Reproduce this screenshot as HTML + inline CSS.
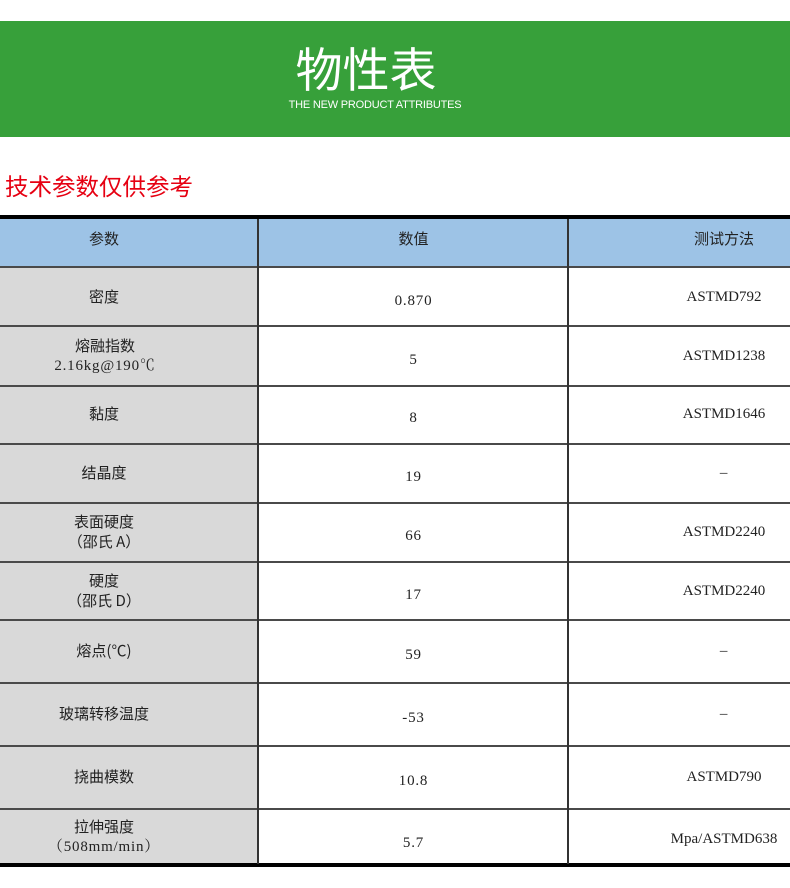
<!DOCTYPE html>
<html><head><meta charset="utf-8"><style>
*{margin:0;padding:0;box-sizing:border-box}
body{width:790px;height:888px;background:#fff;position:relative;overflow:hidden;font-family:"Liberation Serif","Noto Serif CJK SC","Noto Sans CJK SC",serif;color:#222}
.band{position:absolute;left:0;top:21px;width:790px;height:116px;background:#37a03a}
.t1{position:absolute;left:0;width:732px;text-align:center;top:35px;font:47px "Noto Sans CJK SC",sans-serif;color:#fff;line-height:64px}
.t2{position:absolute;left:0;width:750px;text-align:center;top:99px;font:11px "Liberation Sans",sans-serif;color:#fff;letter-spacing:-0.2px}
.red{position:absolute;left:5px;top:169px;font:23.5px "Noto Sans CJK SC",sans-serif;color:#e60012;line-height:32px}
.c{position:absolute;display:flex;align-items:center;justify-content:center;text-align:center;font-size:15px;line-height:20px;flex-direction:column;letter-spacing:0.8px}
.m{letter-spacing:0}
.cn{font-family:"Noto Sans CJK SC",sans-serif;font-size:15px;letter-spacing:0}
.hl{position:absolute;left:0;width:790px;height:2px;background:#4a4a4a}
.vl{position:absolute;width:2px;background:#333}
</style></head><body>
<div class="band"></div>
<div class="t1">物性表</div>
<div class="t2">THE NEW PRODUCT ATTRIBUTES</div>
<div class="red">技术参数仅供参考</div>

<div style="position:absolute;left:0;top:219px;width:790px;height:48px;background:#9dc3e6"></div>
<div style="position:absolute;left:0;top:267px;width:258px;height:597px;background:#d9d9d9"></div>
<div style="position:absolute;left:0;top:215px;width:790px;height:4px;background:#000"></div>
<div style="position:absolute;left:0;top:863px;width:790px;height:4px;background:#000"></div>
<div class="hl" style="top:266px"></div>
<div class="hl" style="top:325px"></div>
<div class="hl" style="top:385px"></div>
<div class="hl" style="top:443px"></div>
<div class="hl" style="top:502px"></div>
<div class="hl" style="top:561px"></div>
<div class="hl" style="top:619px"></div>
<div class="hl" style="top:682px"></div>
<div class="hl" style="top:745px"></div>
<div class="hl" style="top:808px"></div>
<div class="vl" style="left:257px;top:219px;height:645px"></div>
<div class="vl" style="left:567px;top:219px;height:645px"></div>

<div class="c cn" style="left:0;width:208px;top:219px;height:40px">参数</div>
<div class="c cn" style="left:259px;width:309px;top:219px;height:40px">数值</div>
<div class="c cn" style="left:569px;width:310px;top:219px;height:40px">测试方法</div>

<div class="c" style="left:0;width:208px;top:268px;height:58px"><span class="cn">密度</span></div>
<div class="c" style="left:259px;width:309px;top:272px;height:58px">0.870</div>
<div class="c m" style="left:569px;width:310px;top:268px;height:58px">ASTMD792</div>

<div class="c" style="left:0;width:210px;top:326px;height:60px"><span class="cn">熔融指数</span><span>2.16kg@190℃</span></div>
<div class="c" style="left:259px;width:309px;top:330px;height:60px">5</div>
<div class="c m" style="left:569px;width:310px;top:326px;height:60px">ASTMD1238</div>

<div class="c" style="left:0;width:208px;top:385px;height:58px"><span class="cn">黏度</span></div>
<div class="c" style="left:259px;width:309px;top:389px;height:58px">8</div>
<div class="c m" style="left:569px;width:310px;top:385px;height:58px">ASTMD1646</div>

<div class="c" style="left:0;width:208px;top:444px;height:58px"><span class="cn">结晶度</span></div>
<div class="c" style="left:259px;width:309px;top:448px;height:58px">19</div>
<div class="c" style="left:569px;width:310px;top:444px;height:58px">–</div>

<div class="c" style="left:0;width:208px;top:503px;height:58px"><span class="cn">表面硬度</span><span class="cn">（邵氏 A）</span></div>
<div class="c" style="left:259px;width:309px;top:507px;height:58px">66</div>
<div class="c m" style="left:569px;width:310px;top:503px;height:58px">ASTMD2240</div>

<div class="c" style="left:0;width:208px;top:562px;height:58px"><span class="cn">硬度</span><span class="cn">（邵氏 D）</span></div>
<div class="c" style="left:259px;width:309px;top:566px;height:58px">17</div>
<div class="c m" style="left:569px;width:310px;top:562px;height:58px">ASTMD2240</div>

<div class="c" style="left:0;width:208px;top:620px;height:62px"><span class="cn">熔点(℃)</span></div>
<div class="c" style="left:259px;width:309px;top:624px;height:62px">59</div>
<div class="c" style="left:569px;width:310px;top:620px;height:62px">–</div>

<div class="c" style="left:0;width:208px;top:683px;height:62px"><span class="cn">玻璃转移温度</span></div>
<div class="c" style="left:259px;width:309px;top:687px;height:62px">-53</div>
<div class="c" style="left:569px;width:310px;top:683px;height:62px">–</div>

<div class="c" style="left:0;width:208px;top:746px;height:62px"><span class="cn">挠曲模数</span></div>
<div class="c" style="left:259px;width:309px;top:750px;height:62px">10.8</div>
<div class="c m" style="left:569px;width:310px;top:746px;height:62px">ASTMD790</div>

<div class="c" style="left:0;width:208px;top:810px;height:53px"><span class="cn">拉伸强度</span><span>（508mm/min）</span></div>
<div class="c" style="left:259px;width:309px;top:816px;height:53px">5.7</div>
<div class="c m" style="left:569px;width:310px;top:810px;height:58px">Mpa/ASTMD638</div>
</body></html>
